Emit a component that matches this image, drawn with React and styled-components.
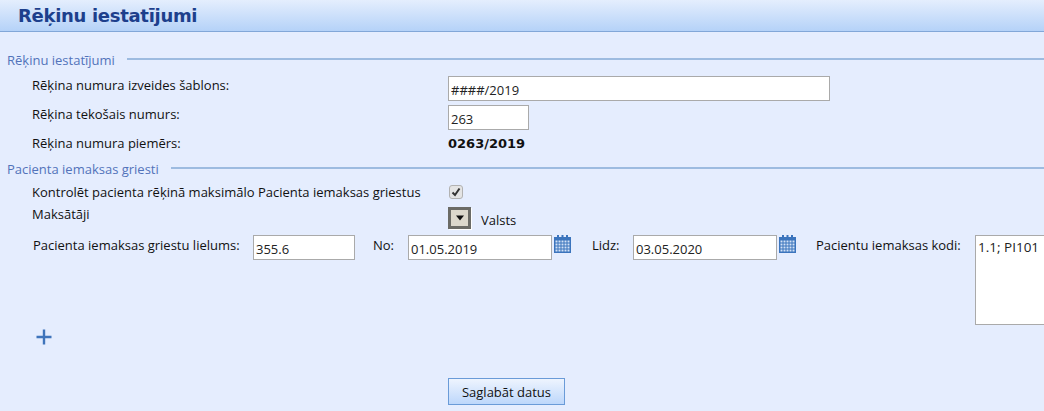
import React from "react";
import styled, { createGlobalStyle } from "styled-components";

const Global = createGlobalStyle`
  html, body { margin: 0; padding: 0; background: #e5edfe; overflow: hidden; }
  body { font-family: "Open Sans", "Liberation Sans", sans-serif; font-size: 13px; color: #111; }
`;
const Page = styled.div`width: 1044px; height: 411px; overflow: hidden; background: #e5edfe;`;
const Header = styled.header`
  height: 31px; box-sizing: content-box; border-bottom: 1px solid #82a7d8;
  background: linear-gradient(#e4eefd, #b5d2f8);
  padding-left: 18px; display: flex; align-items: center;
`;
const Title = styled.h1`
  margin: 0; font: bold 18px "DejaVu Sans", sans-serif; color: #1d3f8c; letter-spacing: -0.3px;
`;
const Section = styled.div`
  display: flex; align-items: center; height: 20px; padding-left: 7px; color: #5273ba;
  margin-top: ${p => p.$top}px; gap: 12px;
`;
const Rule = styled.span`flex: 1; height: 2px; background: #9dbbe0; position: relative; top: -1px;`;
const Row = styled.div`
  display: flex; align-items: ${p => p.$align || "center"}; height: ${p => p.$h}px; padding-left: 32px;
  margin-top: ${p => p.$top || 0}px;
`;
const Label = styled.label`width: 416px; flex: none;`;
const Input = styled.input`
  box-sizing: border-box; height: 25px; width: ${p => p.$w}px; border: 1px solid #aaa; background: #fff;
  font: 13px "Open Sans", sans-serif; color: #222; padding: 2px 2px 0; outline: none; flex: none;
  margin-left: ${p => p.$left || 0}px;
`;
const Strong = styled.b`font: bold 13px "DejaVu Sans", sans-serif; color: #111;`;
const CheckBox = styled.span`
  width: 12px; height: 12px; border: 1px solid #b2b2b2; border-radius: 3px; background: #e4e4e4;
  display: flex; align-items: center; justify-content: center; margin-left: 1px;
`;
const DropBtn = styled.span`
  box-sizing: border-box; width: 23px; height: 22px; border: 3px solid #6b6b66; background: #dcd8cc;
  display: flex; align-items: center; justify-content: center; margin-top: 2px;
  box-shadow: 1px 1px 0 #fff; flex: none;
`;
const DropText = styled.span`margin: 6px 0 0 10px; color: #111;`;
const PeriodRow = styled.div`
  display: flex; align-items: flex-start; height: 90px; padding-left: 33px; margin-top: 6px;
`;
const InlineLabel = styled.label`
  flex: none; width: ${p => p.$w}px; line-height: 20px; margin-left: ${p => p.$left || 0}px;
`;
const Cal = styled.svg`flex: none; margin: 0 0 0 2px;`;
const Area = styled.textarea`
  box-sizing: border-box; width: 90px; height: 90px; flex: none; border: 1px solid #aaa; background: #fff;
  font: 13.5px "Open Sans", sans-serif; color: #222; padding: 2px; outline: none; resize: none; overflow: hidden;
`;
const Plus = styled.svg`display: block; margin: 4px 0 0 36px;`;
const Actions = styled.div`display: flex; padding-left: 448px; margin-top: 33px;`;
const Save = styled.button`
  box-sizing: border-box; width: 117px; height: 27px; border: 1px solid #6a9bd8;
  background: linear-gradient(#eef4fe, #bdd7fb); font: 13px "Open Sans", sans-serif; color: #111; padding: 0;
`;

const CalIcon = () => (
  <Cal width="17" height="18" viewBox="0 0 17 18">
    <rect x="0" y="2" width="17" height="16" fill="#3b74bd" />
    <rect x="3" y="0" width="2" height="4" fill="#3b74bd" />
    <rect x="7.5" y="0" width="2" height="4" fill="#3b74bd" />
    <rect x="12" y="0" width="2" height="4" fill="#3b74bd" />
    {[6, 9, 12, 15].map(y => [1.5, 4.5, 7.5, 10.5, 13.5].map(x => (
      <rect key={x + "-" + y} x={x} y={y - 0.5} width="2" height="2" fill="#d4e2f6" />
    )))}
  </Cal>
);

export default function App() {
  return (
    <Page>
      <Global />
      <Header><Title>Rēķinu iestatījumi</Title></Header>
      <Section $top={18}>Rēķinu iestatījumi<Rule /></Section>
      <Row $h={25} $top={6} $align="flex-start"><Label>Rēķina numura izveides šablons:</Label><Input $w={382} defaultValue="####/2019" /></Row>
      <Row $h={25} $top={4} $align="flex-start"><Label>Rēķina tekošais numurs:</Label><Input $w={81} defaultValue="263" /></Row>
      <Row $h={20} $top={3}><Label>Rēķina numura piemērs:</Label><Strong>0263/2019</Strong></Row>
      <Section $top={6}>Pacienta iemaksas griesti<Rule /></Section>
      <Row $h={20} $top={3}>
        <Label>Kontrolēt pacienta rēķinā maksimālo Pacienta iemaksas griestus</Label>
        <CheckBox>
          <svg width="10" height="10" viewBox="0 0 10 10"><path d="M1.5 5.5 L4 8 L8.5 1.5" fill="none" stroke="#333" strokeWidth="2" /></svg>
        </CheckBox>
      </Row>
      <Row $h={24} $top={3} $align="flex-start">
        <Label>Maksātāji</Label>
        <DropBtn><svg width="10" height="6" viewBox="0 0 10 6"><path d="M1 0.5 H9 L5 5.5 Z" fill="#111" /></svg></DropBtn>
        <DropText>Valsts</DropText>
      </Row>
      <PeriodRow>
        <InlineLabel $w={220}>Pacienta iemaksas griestu lielums:</InlineLabel>
        <Input $w={102} defaultValue="355.6" />
        <InlineLabel $w={35} $left={18}>No:</InlineLabel>
        <Input $w={144} defaultValue="01.05.2019" />
        <CalIcon />
        <InlineLabel $w={41} $left={21}>Lidz:</InlineLabel>
        <Input $w={144} defaultValue="03.05.2020" />
        <CalIcon />
        <InlineLabel $w={159} $left={20}>Pacientu iemaksas kodi:</InlineLabel>
        <Area defaultValue="1.1; PI101" />
      </PeriodRow>
      <Plus width="16" height="16" viewBox="0 0 16 16"><path d="M8 0.5 V15.5 M0.5 8 H15.5" stroke="#3f74bb" strokeWidth="2.4" /></Plus>
      <Actions><Save>Saglabāt datus</Save></Actions>
    </Page>
  );
}
